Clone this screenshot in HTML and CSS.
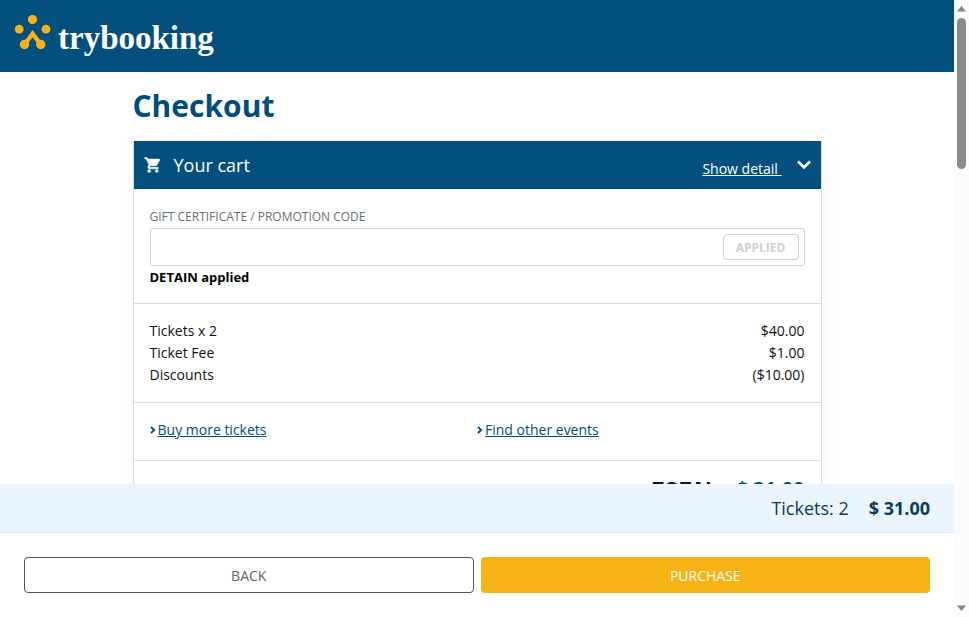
FILE: index.html
```html
<!DOCTYPE html>
<html lang="en">
<head>
    <meta charset="UTF-8">
    <meta name="viewport" content="width=device-width, initial-scale=1.0">
    <title>Checkout - TryBooking</title>
    <link rel="stylesheet" href="styles.css">
</head>
<body>

    <div class="page">
        <!-- Header -->
        <header class="site-header">
            <a class="logo" href="#" aria-label="trybooking">
                <svg class="logo-mark" width="38" height="38" viewBox="0 0 38 38" fill="#f7b314" aria-hidden="true">
                    <circle cx="18.5" cy="5.5" r="4.6"/>
                    <circle cx="5.2" cy="15.2" r="4.4"/>
                    <circle cx="32" cy="15.2" r="4.4"/>
                    <circle cx="10.5" cy="30.5" r="4.7"/>
                    <circle cx="26.8" cy="30.5" r="4.7"/>
                    <path d="M10.5 30.5 18.6 19.6 26.8 30.5" fill="none" stroke="#f7b314" stroke-width="4.4"/>
                </svg>
                <span class="logo-text">trybooking</span>
            </a>
        </header>

        <!-- Cart -->
        <main class="content">
            <div class="container">
                <h1>Checkout</h1>

                <section class="cart">
                    <div class="cart-header">
                        <svg class="cart-icon" width="18" height="18" viewBox="0 0 24 24" fill="#fff" stroke="#fff" stroke-width=".6" aria-hidden="true">
                            <path d="M7 18c-1.1 0-2 .9-2 2s.9 2 2 2 2-.9 2-2-.9-2-2-2zM1 2v2h2l3.6 7.6-1.4 2.4c-.1.3-.2.6-.2 1 0 1.1.9 2 2 2h12v-2H7.4c-.1 0-.2-.1-.2-.2v-.1l.9-1.7h7.5c.7 0 1.4-.4 1.7-1l3.6-6.5c.1-.2.1-.3.1-.5 0-.6-.4-1-1-1H5.2l-.9-2H1zm16 16c-1.1 0-2 .9-2 2s.9 2 2 2 2-.9 2-2-.9-2-2-2z"/>
                        </svg>
                        <h2>Your cart</h2>
                        <a class="show-detail" href="#">Show detail&nbsp;</a>
                        <svg class="chevron-down" width="16" height="10" viewBox="0 0 16 10" fill="none" stroke="#fff" stroke-width="2.6" aria-hidden="true">
                            <path d="M2 1.5 8 7.5 14 1.5"/>
                        </svg>
                    </div>

                    <div class="cart-section promo">
                        <label for="promoCode">GIFT CERTIFICATE / PROMOTION CODE</label>
                        <div class="promo-box">
                            <input type="text" id="promoCode">
                            <button class="applied-button" type="button" disabled>APPLIED</button>
                        </div>
                        <p>DETAIN applied</p>
                    </div>

                    <dl class="cart-section lines">
                        <div><dt>Tickets x 2</dt><dd>$40.00</dd></div>
                        <div><dt>Ticket Fee</dt><dd>$1.00</dd></div>
                        <div><dt>Discounts</dt><dd>($10.00)</dd></div>
                    </dl>

                    <div class="cart-section links">
                        <div class="link-item">
                            <svg width="6" height="8" viewBox="0 0 6 8" fill="none" stroke="#004e7c" stroke-width="1.8" aria-hidden="true"><path d="M1 1 4.2 4 1 7"/></svg>
                            <a href="#">Buy more tickets</a>
                        </div>
                        <div class="link-item">
                            <svg width="6" height="8" viewBox="0 0 6 8" fill="none" stroke="#004e7c" stroke-width="1.8" aria-hidden="true"><path d="M1 1 4.2 4 1 7"/></svg>
                            <a href="#">Find other events</a>
                        </div>
                    </div>

                    <div class="cart-section total">
                        <span>TOTAL</span>
                        <span class="total-amount">$ 31.00</span>
                    </div>
                </section>
            </div>
        </main>

        <!-- Fixed summary and actions -->
        <footer>
            <div class="summary">
                <span>Tickets: 2</span>
                <strong>$ 31.00</strong>
            </div>
            <div class="actions">
                <button class="back-button" type="button">BACK</button>
                <button class="purchase-button" type="button">PURCHASE</button>
            </div>
        </footer>
    </div>

    <!-- Scroll track -->
    <div class="scroll-track" aria-hidden="true">
        <svg width="9" height="6" viewBox="0 0 9 6" fill="#858585"><path d="M0 5.5 4.5 0 9 5.5z"/></svg>
        <div class="scroll-thumb"></div>
        <svg class="scroll-down" width="9" height="6" viewBox="0 0 9 6" fill="#858585"><path d="M0 .5 4.5 6 9 .5z"/></svg>
    </div>

</body>
</html>
```
FILE: styles.css
```css
/* Base styles */
* {
    box-sizing: border-box;
}

body {
    margin: 0;
    height: 100vh;
    overflow: hidden;
    display: flex;
    background-color: #fff;
    color: #111;
    font-family: 'Open Sans', sans-serif;
    font-size: 14px;
    line-height: 22px;
}

h1, h2, p, dl, dd {
    margin: 0;
}

a {
    color: #004e7c;
}

button, input {
    font-family: inherit;
}

.page {
    flex: 1;
    min-width: 0;
    display: flex;
    flex-direction: column;
}

/* Header */
.site-header {
    flex: none;
    height: 72px;
    padding: 0 14px;
    background-color: #03507f;
}

.logo {
    display: inline-flex;
    align-items: flex-start;
    gap: 6px;
    padding-top: 14px;
    color: #fff;
    text-decoration: none;
}

.logo-text {
    font-family: 'Liberation Serif', serif;
    font-size: 33px;
    font-weight: bold;
    line-height: 48px;
}

/* Content */
.content {
    flex: 1;
    min-height: 0;
    overflow: hidden;
    padding: 0 16px;
}

.container {
    max-width: 689px;
    margin: 0 auto;
}

h1 {
    padding: 14px 0 15px;
    color: #004e7c;
    font-size: 30px;
    line-height: 40px;
}

/* Cart */
.cart {
    border: 1px solid #ddd;
    border-top: 0;
    box-shadow: 0 0 20px rgba(0, 0, 0, 0.04);
}

.cart-header {
    display: flex;
    align-items: center;
    height: 48px;
    padding: 0 10px;
    background-color: #03507f;
    color: #fff;
}

.cart-header h2 {
    flex: 1;
    margin-left: 12px;
    font-size: 18px;
    font-weight: normal;
}

.show-detail {
    margin: 7px 14px 0 0;
    color: #fff;
}

.chevron-down {
    margin-right: -1px;
}

.cart-section {
    padding: 16px;
    border-bottom: 1px solid #ddd;
}

.promo {
    padding-bottom: 15px;
}

.promo label {
    display: block;
    color: #6b6f76;
    font-size: 12px;
    line-height: 23px;
}

.promo-box {
    display: flex;
    align-items: center;
    height: 38px;
    padding-right: 5px;
    border: 1px solid #d0d0d0;
    border-radius: 3px;
}

.promo-box input {
    flex: 1;
    min-width: 0;
    height: 100%;
    padding: 0 10px;
    border: 0;
    outline: 0;
    background: transparent;
    font-size: 14px;
}

.applied-button {
    width: 76px;
    height: 26px;
    padding: 0;
    border: 1px solid #d0d0d0;
    border-radius: 4px;
    background-color: #fff;
    color: #d0d0d0;
    font-size: 12px;
    font-weight: bold;
}

.promo p {
    color: #000;
    font-size: 13px;
    font-weight: bold;
}

.lines div {
    display: flex;
    justify-content: space-between;
}

.links {
    display: grid;
    grid-template-columns: 1fr 1fr;
    padding-bottom: 19px;
}

.link-item {
    display: flex;
    align-items: center;
    gap: 2px;
}

.total {
    display: flex;
    justify-content: flex-end;
    gap: 20px;
    color: #001a33;
    font-size: 20px;
    font-weight: bold;
    line-height: 24px;
}

.total-amount {
    color: #004e7c;
}

/* Summary and actions */
footer {
    flex: none;
    background-color: #fff;
}

.summary {
    display: flex;
    justify-content: flex-end;
    gap: 20px;
    padding: 12px 24px;
    border-bottom: 1px solid #d9e4f0;
    background-color: #ebf5fe;
    color: #0b3c5d;
    font-size: 18px;
    line-height: 24px;
}

.actions {
    display: grid;
    grid-template-columns: 1fr 1fr;
    gap: 7px;
    padding: 24px;
}

.actions button {
    height: 36px;
    border-radius: 4px;
    font-size: 14px;
    cursor: pointer;
}

.back-button {
    border: 1px solid #555;
    background-color: #fff;
    color: #666;
}

.purchase-button {
    border: 0;
    background-color: #f7b314;
    color: #fff;
}

/* Scroll track */
.scroll-track {
    flex: none;
    display: flex;
    flex-direction: column;
    align-items: center;
    width: 15px;
    padding: 6px 0;
    background-color: #fcfcfc;
}

.scroll-thumb {
    width: 9px;
    height: 25%;
    margin-top: 6px;
    border-radius: 5px;
    background-color: #8b8b8b;
}

.scroll-down {
    margin-top: auto;
}
```
